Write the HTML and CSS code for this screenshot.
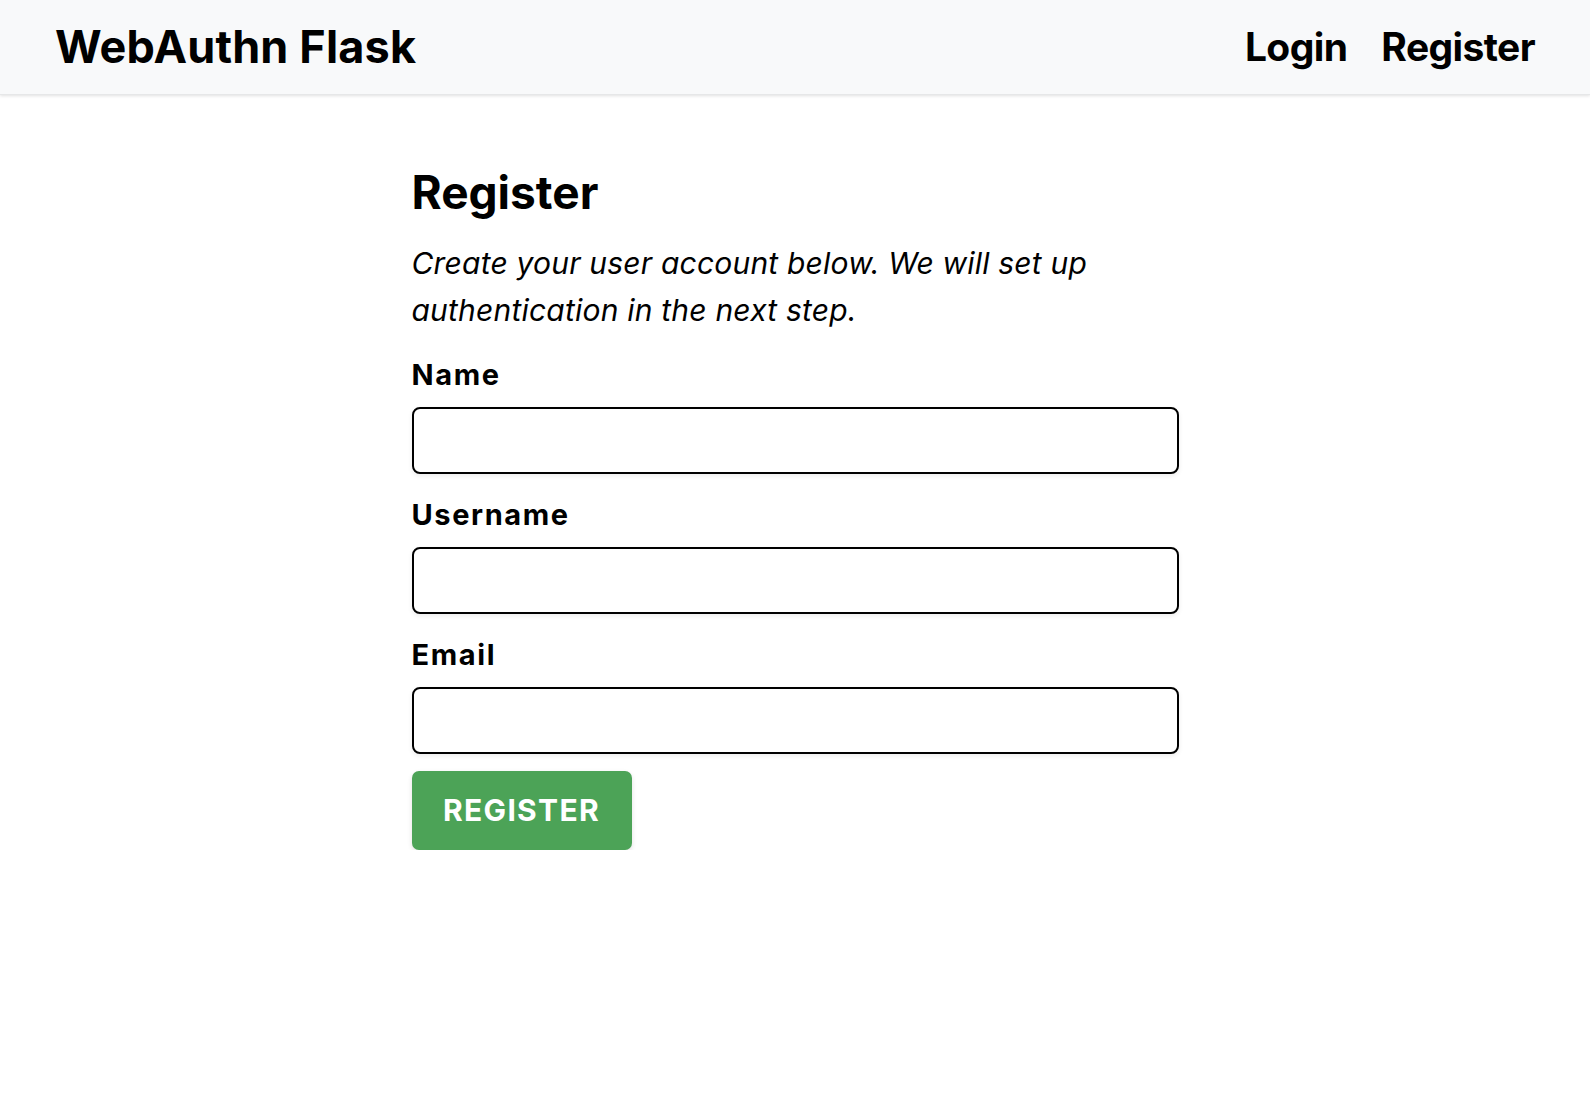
FILE: index.html
```html
<!DOCTYPE html>
<html lang="en">
<head>
<meta charset="utf-8">
<title>WebAuthn Flask - Register</title>
<link rel="stylesheet" href="styles.css">
</head>
<body>
<header class="navbar">
  <a class="brand" href="#">WebAuthn Flask</a>
  <nav class="nav-links">
    <a class="nav-link" href="#">Login</a>
    <a class="nav-link" href="#">Register</a>
  </nav>
</header>
<main class="container">
  <h1 class="page-title">Register</h1>
  <p class="lead">Create your user account below. We will set up authentication in the next step.</p>
  <form class="form">
    <div class="field">
      <label class="field-label" for="name">Name</label>
      <input class="field-input" id="name" type="text">
    </div>
    <div class="field">
      <label class="field-label" for="username">Username</label>
      <input class="field-input" id="username" type="text">
    </div>
    <div class="field">
      <label class="field-label" for="email">Email</label>
      <input class="field-input" id="email" type="email">
    </div>
    <button class="btn-register" type="button">Register</button>
  </form>
</main>
</body>
</html>
```
FILE: styles.css
```css
* { box-sizing: border-box; }
html, body { margin: 0; padding: 0; }
body {
  font-family: Inter, "Noto Sans", sans-serif;
  color: #000;
  background: #fff;
}
.navbar {
  height: 95px;
  background: #f8f9fa;
  display: flex;
  align-items: center;
  justify-content: space-between;
  padding: 0 55px 2px 55px;
  box-shadow: 0 1px 3px rgba(0,0,0,0.12);
  border-bottom: 1px solid #e6e7e8;
}
.brand {
  font-size: 45px;
  font-weight: 700;
  color: #000;
  text-decoration: none;
  letter-spacing: 0.15px;
}
.nav-links {
  display: flex;
  gap: 34px;
}
.nav-link {
  font-size: 39px;
  font-weight: 700;
  color: #000;
  text-decoration: none;
  letter-spacing: -0.6px;
}
.container {
  width: 767px;
  margin: 0 auto;
  padding-top: 71px;
}
.page-title {
  font-size: 46px;
  font-weight: 700;
  line-height: 52.8px;
  margin: 0;
  letter-spacing: 0;
}
.lead {
  font-size: 30px;
  font-style: italic;
  line-height: 47px;
  margin: 21px 0 0 0;
  width: 700px;
  letter-spacing: 0.2px;
}
.form {
  display: flex;
  flex-direction: column;
  margin-top: 20px;
}
.field {
  display: flex;
  flex-direction: column;
  margin-bottom: 20px;
}
.field:last-of-type { margin-bottom: 17px; }
.field-label {
  font-size: 29px;
  font-weight: 700;
  line-height: 42px;
  margin-bottom: 11px;
  letter-spacing: 1.6px;
}
.field-input {
  height: 67px;
  width: 100%;
  border: 2px solid #000;
  border-radius: 8px;
  background: #fff;
  box-shadow: 0 2px 5px rgba(0,0,0,0.08);
  font-family: inherit;
  font-size: 28px;
  padding: 0 16px;
}
.btn-register {
  align-self: flex-start;
  width: 220px;
  height: 79px;
  background: #4ca357;
  color: #fff;
  border: none;
  border-radius: 7px;
  font-family: inherit;
  font-size: 30px;
  font-weight: 700;
  text-transform: uppercase;
  letter-spacing: 1.3px;
  box-shadow: 0 2px 5px rgba(0,0,0,0.12);
  padding: 0;
}
```
